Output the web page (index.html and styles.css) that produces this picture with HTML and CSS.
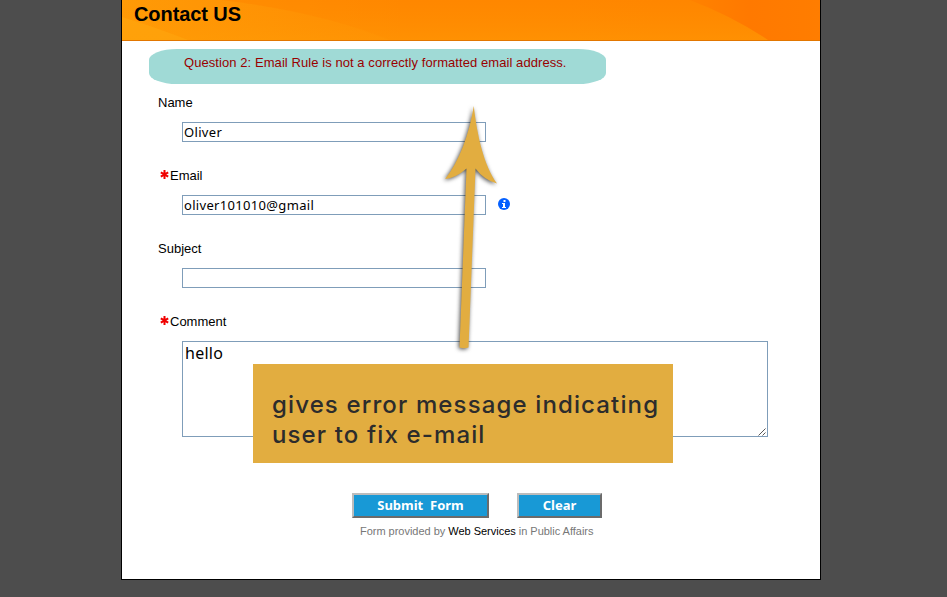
FILE: index.html
```html
<!DOCTYPE html>
<html lang="en">
<head>
<meta charset="utf-8">
<title>Contact US</title>
<link rel="stylesheet" href="styles.css">
</head>
<body>
<main class="panel">
  <header class="banner">
    <svg class="banner-art" width="698" height="40" viewBox="0 0 698 40" aria-hidden="true">
      <defs>
        <linearGradient id="base" x1="0" y1="0" x2="1" y2="0">
          <stop offset="0" stop-color="#ff9a06"/><stop offset=".4" stop-color="#ff8b02"/><stop offset="1" stop-color="#ff8600"/>
        </linearGradient>
        <linearGradient id="glow" x1="0" y1="0" x2="0" y2="1">
          <stop offset="0" stop-color="#ff9500" stop-opacity="0"/><stop offset="1" stop-color="#ff9d06" stop-opacity=".45"/>
        </linearGradient>
        <linearGradient id="corner" x1="0" y1="0" x2="1" y2="0">
          <stop offset="0" stop-color="#ff8200"/><stop offset=".45" stop-color="#ff7900"/><stop offset="1" stop-color="#ff7d00"/>
        </linearGradient>
      </defs>
      <rect width="698" height="40" fill="url(#base)"/>
      <path d="M100 0Q200 12 268 40H698V0Z" fill="#ff8500" opacity=".55"/>
      <path d="M0 17Q30 26 66 40H0Z" fill="#ffab12" opacity=".6"/>
      <rect width="698" height="40" fill="url(#glow)"/>
      <path d="M568 0Q610 16 646 40H698V0Z" fill="url(#corner)"/>
    </svg>
    <h1 class="title">Contact US</h1>
  </header>
  <p class="alert">Question 2: Email Rule is not a correctly formatted email address.</p>
  <form class="form">
    <div class="field">
      <label class="label" for="name">Name</label>
      <input class="input" id="name" type="text" value="Oliver">
    </div>
    <div class="field">
      <label class="label required" for="email"><svg class="star" width="9" height="9" viewBox="0 0 9 9"><path d="M4.500 0v9M.8 2.300l7.400 4.400M.8 6.700l7.400-4.400" stroke="#f00000" stroke-width="2"/></svg>Email</label>
      <div class="row">
        <input class="input" id="email" type="text" value="oliver101010@gmail">
        <svg class="info" width="12" height="12" viewBox="0 0 12 12"><circle cx="6" cy="6" r="6" fill="#0560ff"/><path d="M5.500 2h2v2h-2zM4 5h3v4h1v1H4V9h1V6H4z" fill="#fff"/></svg>
      </div>
    </div>
    <div class="field">
      <label class="label" for="subject">Subject</label>
      <input class="input" id="subject" type="text">
    </div>
    <div class="field">
      <label class="label required" for="comment"><svg class="star" width="9" height="9" viewBox="0 0 9 9"><path d="M4.500 0v9M.8 2.300l7.400 4.400M.8 6.700l7.400-4.400" stroke="#f00000" stroke-width="2"/></svg>Comment</label>
      <div class="comment-box">
        <textarea class="comment" id="comment">hello</textarea>
        <svg class="grip" width="8" height="8" viewBox="0 0 8 8"><path d="M.5 7.500l7-7M4.500 7.500l3-3" stroke="#444" stroke-width=".9"/></svg>
      </div>
    </div>
    <div class="actions">
      <button class="button submit" type="button">Submit&nbsp; Form</button>
      <button class="button clear" type="button">Clear</button>
    </div>
  </form>
  <p class="credit">Form provided by <a class="credit-link">Web Services</a> in Public Affairs</p>
</main>
<svg class="arrow" width="80" height="270" viewBox="435 95 80 270" aria-hidden="true">
  <path d="M473.800 106C477 135 484 166 497 183.500Q484 180 475.500 168.500L468.500 347.500Q464 349 459.500 347.500L466.500 168.500Q456 178 445 179C459 162 469 135 473.800 106Z" fill="#e2ad40"/>
</svg>
<aside class="note">gives error message indicating<br>user to fix e-mail</aside>
</body>
</html>
```

FILE: styles.css
```css
* { box-sizing: border-box; }
html { height: 100%; overflow: hidden; }
body {
  position: relative;
  margin: 0;
  height: 597px;
  background: #4d4d4d;
  font-family: "Liberation Sans", Arial, sans-serif;
  font-size: 13px;
  color: #000;
}
.panel {
  width: 700px;
  height: 580px;
  margin-left: 121px;
  border: 1px solid #000;
  border-top: 0;
  background: #fff;
}
.banner {
  position: relative;
  height: 41px;
  border-bottom: 1px solid #e27600;
}
.banner-art { position: absolute; inset: 0; }
.title {
  position: relative;
  margin: 0;
  padding: 2px 0 0 12px;
  font-size: 20px;
  line-height: 24px;
  letter-spacing: -.08px;
}
.alert {
  width: 457px;
  height: 35px;
  margin: 8px 0 0 27px;
  padding-left: 35px;
  border-radius: 28px / 11px;
  background: #a0dad6;
  color: #990000;
  line-height: 27px;
  letter-spacing: .07px;
  white-space: nowrap;
}
.form { padding: 10px 0 0 36px; }
.field { height: 73px; }
.label {
  display: flex;
  align-items: center;
  height: 16px;
  margin-bottom: 12px;
}
.required { padding-left: 2px; gap: 1px; }
.star { margin-top: -1px; }
.row { display: flex; align-items: center; gap: 12px; }
.info { margin-top: -2px; }
.input {
  display: block;
  width: 304px;
  height: 20px;
  margin: 0 0 0 24px;
  padding: 0 1px;
  border: 1px solid #7f9db9;
  border-radius: 0;
  background: #fff;
  font: 13px "Noto Sans", sans-serif;
  letter-spacing: .32px;
  color: #000;
}
.comment-box { position: relative; width: 586px; margin-left: 24px; }
.comment {
  display: block;
  width: 586px;
  height: 96px;
  padding: 0 2px;
  border: 1px solid #7f9db9;
  resize: none;
  font: 16px/22px "Noto Sans", sans-serif;
  letter-spacing: .25px;
  color: #000;
}
.grip { position: absolute; right: 2px; bottom: 1px; }
.actions { display: flex; gap: 28px; padding: 107px 0 0 194px; }
.button {
  height: 25px;
  padding: 0 0 1px;
  border: 2px solid;
  border-color: #bcbcbc #6b6b6b #6b6b6b #bcbcbc;
  border-radius: 0;
  background: #1899d6;
  color: #fff;
  font: bold 13px/20px "Noto Sans", sans-serif;
}
.submit { width: 137px; }
.clear { width: 85px; }
.credit {
  margin: 6px 0 0 238px;
  font-size: 11px;
  line-height: 14px;
  letter-spacing: -.02px;
  color: #777;
  white-space: nowrap;
}
.credit-link { color: #000; }
.arrow {
  position: absolute;
  left: 435px;
  top: 95px;
  filter: drop-shadow(-1px 1px 2px rgba(0, 0, 0, .7));
}
.note {
  position: absolute;
  left: 253px;
  top: 364px;
  width: 420px;
  height: 99px;
  padding: 26px 0 0 19px;
  background: #e2ad40;
  color: #2c2c2c;
  font: 500 24px/30px Inter, sans-serif;
  letter-spacing: 1.13px;
  white-space: nowrap;
}
```
